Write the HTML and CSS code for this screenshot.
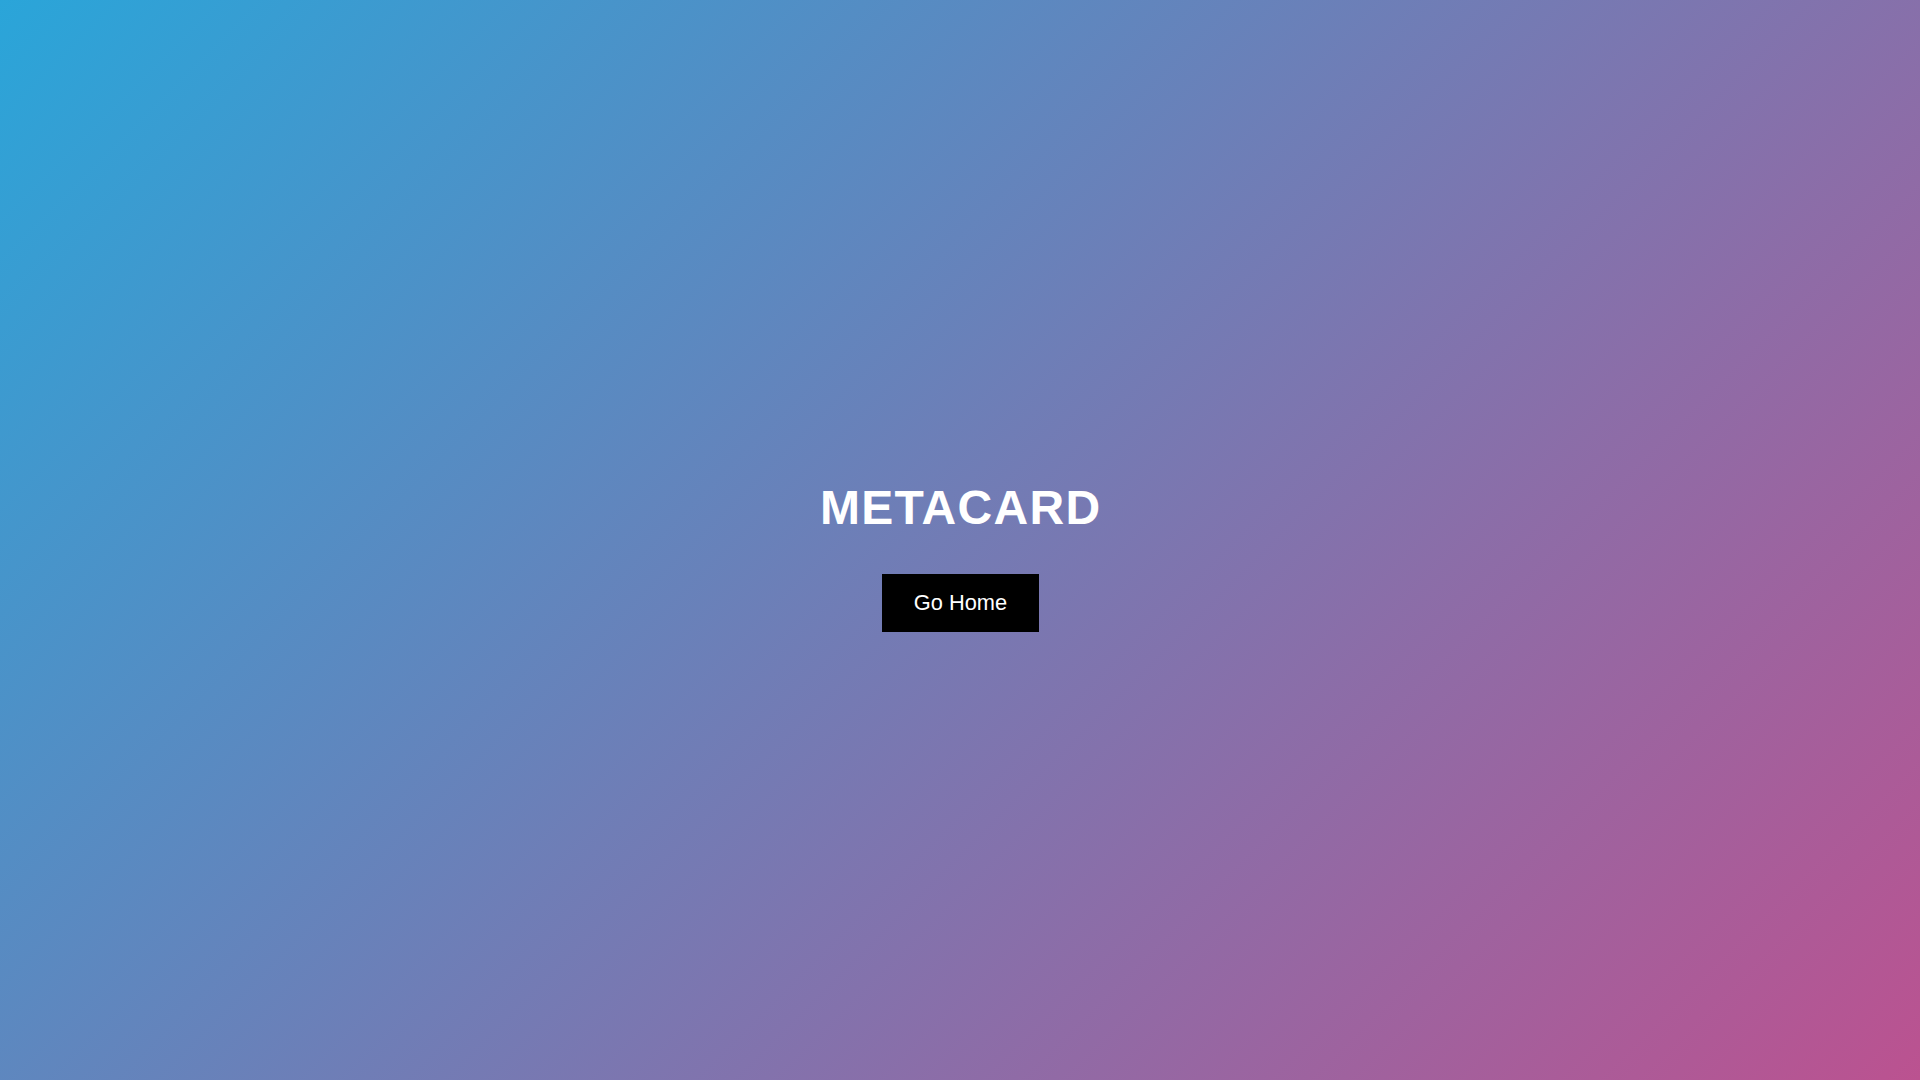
FILE: index.html
```html
<!DOCTYPE html>
<html lang="en">
<head>
<meta charset="utf-8">
<title>METACARD</title>
<link rel="stylesheet" href="styles.css">
</head>
<body>
<main class="page">
  <h1 class="title">METACARD</h1>
  <button class="home-btn" type="button">Go Home</button>
</main>
</body>
</html>
```
FILE: styles.css
```css
html, body {
  margin: 0;
  padding: 0;
  height: 100%;
}
body {
  font-family: "Liberation Sans", Arial, sans-serif;
  background: linear-gradient(135deg, #2aa5d9 0%, #bb5290 100%);
  color: #fff;
}
.page {
  height: 100vh;
  display: flex;
  flex-direction: column;
  align-items: center;
  justify-content: center;
}
.title {
  margin: 32px 0 39px;
  font-size: 48px;
  font-weight: 700;
  letter-spacing: 1.3px;
  text-indent: 1.3px;
  color: #fff;
  line-height: normal;
}
.home-btn {
  width: 157px;
  height: 58px;
  margin: 0 0 0 1px;
  padding: 0;
  border: none;
  background: #000;
  color: #fff;
  font-family: "Liberation Sans", Arial, sans-serif;
  font-size: 21.8px;
  cursor: pointer;
}
```
